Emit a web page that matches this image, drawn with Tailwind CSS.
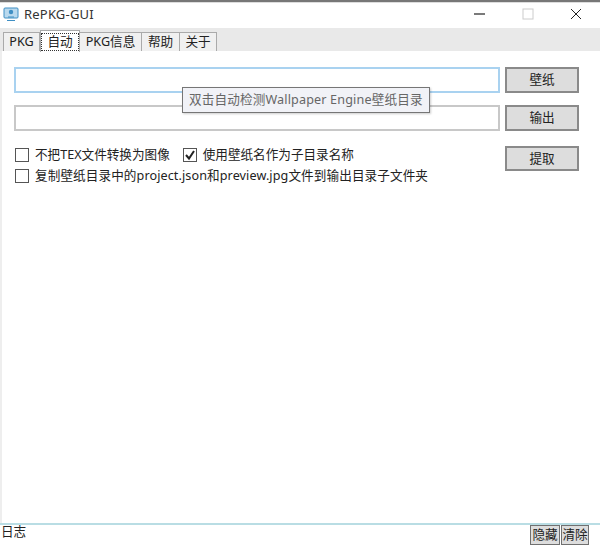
<!DOCTYPE html>
<html lang="zh-CN">
<head>
  <meta charset="UTF-8" />
  <title>RePKG-GUI</title>
  <script src="https://cdn.jsdelivr.net/npm/@tailwindcss/browser@4"></script>
</head>
<body class="bg-white text-[#222] text-[12.6px] leading-[18px] font-['Noto_Sans','Noto_Sans_CJK_SC',sans-serif] overflow-hidden">
<div class="relative w-[600px] h-[546px] flex flex-col overflow-hidden">

  <!-- top edge of the window behind -->
  <div class="h-[3px] bg-[#777] border-b border-[#ddd]"></div>

  <!-- title bar -->
  <div class="h-[25px] flex items-center pl-[3px] pb-[3px] text-[#333]">
    <svg width="16" height="16" viewBox="0 0 16 16" class="mr-[5px]">
      <rect x="1" y="2" width="14" height="10" rx="1" fill="#b9d9ee" stroke="#3f8fc4"/>
      <circle cx="8" cy="6" r="2.2" fill="#3f8fc4"/>
      <path d="M5 11h6M4 14.5h8" stroke="#3f8fc4" stroke-width="1.2"/>
    </svg>
    <span class="text-[13px] tracking-[0.2px]">RePKG-GUI</span>
    <div class="ml-auto flex items-center">
      <svg width="12" height="12" viewBox="0 0 12 12" class="mr-[36px]"><path d="M0 6h11" stroke="#222" stroke-width="1.2"/></svg>
      <svg width="12" height="12" viewBox="0 0 12 12" class="mr-[36px]"><rect x="1" y="1" width="10" height="10" fill="none" stroke="#ccc"/></svg>
      <svg width="12" height="12" viewBox="0 0 12 12" class="mr-[18px]"><path d="M1 1l10 10M11 1L1 11" stroke="#222"/></svg>
    </div>
  </div>

  <!-- tabs -->
  <div class="h-[23px] bg-[#e9e9e9] flex items-end pl-[3px]">
    <div class="h-[19px] w-[37px] flex items-center justify-center bg-[#f0f0f0] border border-b-0 border-[#aaa]">PKG</div>
    <div class="relative z-10 -mb-px h-[22px] w-[40px] flex items-center justify-center bg-white border border-b-0 border-[#aaa]">
      <span class="border border-dotted border-[#333] w-[38px] h-[18px] flex items-center justify-center">自动</span>
    </div>
    <div class="h-[19px] w-[62px] flex items-center justify-center bg-[#f0f0f0] border border-b-0 border-l-0 border-[#aaa]">PKG信息</div>
    <div class="h-[19px] w-[38px] flex items-center justify-center bg-[#f0f0f0] border border-b-0 border-l-0 border-[#aaa]">帮助</div>
    <div class="h-[19px] w-[37px] flex items-center justify-center bg-[#f0f0f0] border border-b-0 border-l-0 border-[#aaa]">关于</div>
  </div>

  <!-- auto tab -->
  <div class="flex-1 border-l-2 border-[#eee] pl-[12px] pr-[21px] pt-[16px] flex gap-[5px]">
    <div class="w-[486px]">
      <div class="h-[26px] border-2 border-[#a9d2f0] bg-white"></div>
      <div class="h-[26px] mt-[12px] border-2 border-[#c8c8c8] bg-white"></div>
      <div class="mt-[15px] flex items-center h-[18px]">
        <span class="w-[14px] h-[14px] ml-px border border-[#555] bg-white"></span>
        <span class="ml-[6px]">不把TEX文件转换为图像</span>
        <span class="w-[14px] h-[14px] ml-[13px] border border-[#555] bg-white flex items-center justify-center">
          <svg width="12" height="12" viewBox="0 0 12 12"><path d="M2 6l3 3.5L10 2" fill="none" stroke="#222" stroke-width="2"/></svg>
        </span>
        <span class="ml-[6px]">使用壁纸名作为子目录名称</span>
      </div>
      <div class="mt-[3px] flex items-center h-[18px]">
        <span class="w-[14px] h-[14px] ml-px border border-[#555] bg-white"></span>
        <span class="ml-[6px] tracking-[0.1px]">复制壁纸目录中的project.json和preview.jpg文件到输出目录子文件夹</span>
      </div>
    </div>
    <div class="w-[74px]">
      <button class="w-full h-[26px] flex items-center justify-center bg-[#dddddd] border-2 border-[#8a8a8a]">壁纸</button>
      <button class="w-full h-[26px] mt-[12px] flex items-center justify-center bg-[#dddddd] border-2 border-[#8a8a8a]">输出</button>
      <button class="w-full h-[25px] mt-[15px] flex items-center justify-center bg-[#dddddd] border-2 border-[#8a8a8a]">提取</button>
    </div>
  </div>

  <!-- log bar -->
  <div class="h-[23px] border-t-2 border-[#b9dde4] flex items-start">
    <span class="ml-px -mt-[2px]">日志</span>
    <div class="ml-auto mr-[11px] flex gap-px">
      <button class="w-[30px] h-[20px] flex items-center justify-center bg-[#dddddd] border border-[#707070]">隐藏</button>
      <button class="w-[28px] h-[20px] flex items-center justify-center bg-[#dddddd] border border-[#707070]">清除</button>
    </div>
  </div>

  <!-- tooltip -->
  <div class="absolute left-[182px] top-[87px] w-[248px] h-[26px] flex items-center pl-[6px] tracking-[0.15px] bg-[#f1f2f7] border border-[#767676] text-[#666] shadow-[1px_1px_2px_rgba(0,0,0,0.2)]">双击自动检测Wallpaper Engine壁纸目录</div>
</div>
</body>
</html>
